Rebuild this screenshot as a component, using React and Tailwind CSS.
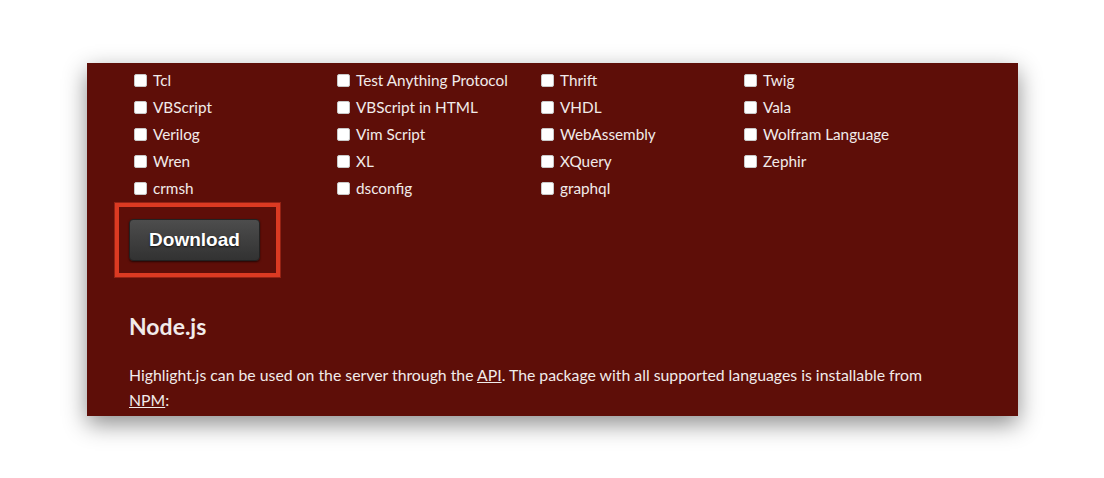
import React from 'react';

const LANGS = [
  ['Tcl', 'Test Anything Protocol', 'Thrift', 'Twig'],
  ['VBScript', 'VBScript in HTML', 'VHDL', 'Vala'],
  ['Verilog', 'Vim Script', 'WebAssembly', 'Wolfram Language'],
  ['Wren', 'XL', 'XQuery', 'Zephir'],
  ['crmsh', 'dsconfig', 'graphql', null],
];

const Check = ({ label }) => (
  <label className="flex items-center h-[27px] pl-[5px]">
    <span className="w-[13px] h-[13px] bg-white rounded-[2px] border border-[#c8c8c8] shrink-0" />
    <span className="ml-[6px] text-[15.3px] text-[#f1ebea]">{label}</span>
  </label>
);

export default function App() {
  return (
    <div
      className="w-[1104px] h-[478px] bg-white pt-[63px] pl-[87px]"
      style={{ fontFamily: 'Lato, "Noto Sans", sans-serif' }}
    >
      <div className="w-[931px] h-[353px] bg-[#5e0e08] shadow-[0_8px_22px_rgba(0,0,0,0.45)] pl-[42px] pt-[4px] text-[#f1ebea]">
        <div className="grid grid-cols-[203px_204px_203px_1fr]">
          {LANGS.flat().map((l, i) => (l ? <Check key={i} label={l} /> : <div key={i} />))}
        </div>

        <div className="mt-[1px] -ml-[14px] inline-block border-[4px] border-[#dc3a22] outline outline-1 outline-[#b8301c]/60 pt-[12px] pb-[12px] pl-[10px] pr-[16px]">
          <button
            className="w-[131px] h-[42px] rounded-[4px] bg-gradient-to-b from-[#4d4d4d] to-[#323232] border border-[#222] text-white text-[19px] font-bold shadow-[0_1px_2px_rgba(0,0,0,0.6)] [text-shadow:0_1px_2px_rgba(0,0,0,0.7)]"
            style={{ fontFamily: '"Liberation Sans", Arial, sans-serif' }}
          >
            Download
          </button>
        </div>

        <h3 className="mt-[35px] text-[23px] font-bold leading-[28px]">Node.js</h3>

        <p className="mt-[22px] text-[15.8px] leading-[25px] w-[805px]">
          Highlight.js can be used on the server through the <a className="underline">API</a>. The package with all
          supported languages is installable from <a className="underline">NPM</a>:
        </p>
      </div>
    </div>
  );
}
